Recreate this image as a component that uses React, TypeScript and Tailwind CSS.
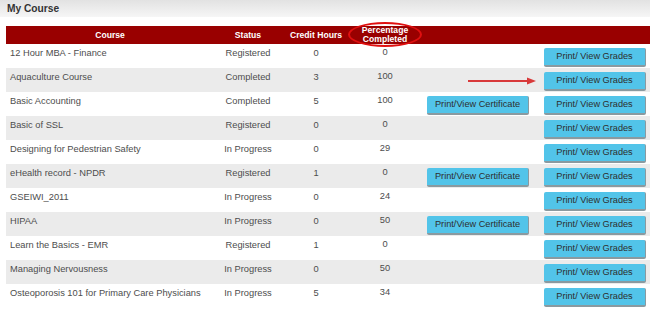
const courses = [
  { name: "12 Hour MBA - Finance", status: "Registered", hours: 0, pct: 0, cert: false },
  { name: "Aquaculture Course", status: "Completed", hours: 3, pct: 100, cert: false },
  { name: "Basic Accounting", status: "Completed", hours: 5, pct: 100, cert: true },
  { name: "Basic of SSL", status: "Registered", hours: 0, pct: 0, cert: false },
  { name: "Designing for Pedestrian Safety", status: "In Progress", hours: 0, pct: 29, cert: false },
  { name: "eHealth record - NPDR", status: "Registered", hours: 1, pct: 0, cert: true },
  { name: "GSEIWI_2011", status: "In Progress", hours: 0, pct: 24, cert: false },
  { name: "HIPAA", status: "In Progress", hours: 0, pct: 50, cert: true },
  { name: "Learn the Basics - EMR", status: "Registered", hours: 1, pct: 0, cert: false },
  { name: "Managing Nervousness", status: "In Progress", hours: 0, pct: 50, cert: false },
  { name: "Osteoporosis 101 for Primary Care Physicians", status: "In Progress", hours: 5, pct: 34, cert: false },
];

const cols = "grid grid-cols-[208px_68px_68px_70px_117px_113px]";

function Btn({ label }: { label: string }) {
  return (
    <button className="h-[19px] w-[102px] whitespace-nowrap rounded-[2px] border-b-2 border-r border-[#8a9aa0] bg-[#52c4e9] text-[9.2px] leading-none text-[#2e2e2e]">
      {label}
    </button>
  );
}

export default function App() {
  return (
    <div className="h-[310px] w-[650px] overflow-hidden bg-white font-['Liberation_Sans',Arial,sans-serif]">
      {/* title bar */}
      <div className="h-[17px] bg-gradient-to-b from-[#e2e2e2] to-[#f6f6f6] pl-[7px] pt-[2px] text-[10.2px] font-bold leading-[13px] text-[#333]">
        My Course
      </div>

      <div className="ml-[6px] mt-[9px]">
        {/* header */}
        <div className={`${cols} relative h-[18px] items-center bg-[#990000] text-center text-[8.6px] font-bold text-white`}>
          <div>Course</div>
          <div>Status</div>
          <div>Credit Hours</div>
          <div className="leading-[9px]">
            Percentage
            <br />
            Completed
          </div>
          <div />
          <div />
          <span className="absolute left-[342px] top-[-4px] h-[25px] w-[74px] rounded-[50%] border-2 border-[#e01010]" />
        </div>

        {/* rows */}
        {courses.map((c, i) => (
          <div
            key={c.name}
            className={`${cols} h-[24px] text-[9.3px] leading-[12px] text-[#4d4d4d] ${i % 2 ? "bg-[#ebebeb]" : "bg-white"}`}
          >
            <div className="whitespace-nowrap pl-[4px] pt-[3px]">{c.name}</div>
            <div className="pt-[3px] text-center">{c.status}</div>
            <div className="pt-[3px] text-center">{c.hours}</div>
            <div className="pt-[2px] text-center">{c.pct}</div>
            <div className="pl-[7px] pt-[4px]">{c.cert && <Btn label="Print/View Certificate" />}</div>
            <div className="relative pl-[7px] pt-[4px]">
              <Btn label="Print/ View Grades" />
              {i === 1 && (
                <svg className="absolute left-[-70px] top-[9px]" width="70" height="8" viewBox="0 0 70 8">
                  <line x1="1" y1="4" x2="62" y2="4" stroke="#d8393a" strokeWidth="2" />
                  <path d="M60 0.5 L69 4 L60 7.5 Z" fill="#d8393a" />
                </svg>
              )}
            </div>
          </div>
        ))}
      </div>
    </div>
  );
}
